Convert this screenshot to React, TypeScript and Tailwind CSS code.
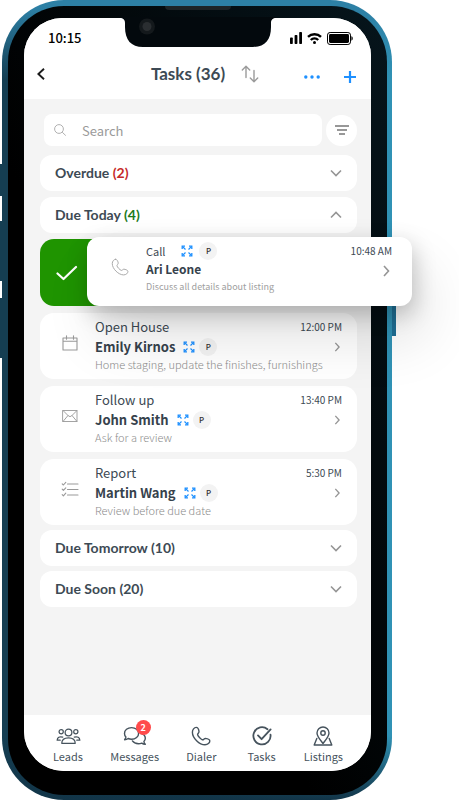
import React, { useState } from "react";

type Task = {
  id: number;
  kind: string;
  name: string;
  note: string;
  time: string;
  icon: React.ReactNode;
};

const stroke = {
  fill: "none",
  stroke: "currentColor",
  strokeLinecap: "round" as const,
  strokeLinejoin: "round" as const,
};

const HANDSET =
  "M5.2 1.4 C3.2 1.4 1.4 3.6 1.4 6.2 C1.4 12 8.4 18.8 14 18.8 C16.8 18.8 18.8 16.8 18.8 15 C18.8 13.4 15.8 12.6 14.4 12.4 C12.9 12.4 12.8 14 11.4 13.8 C9.8 13.2 6.8 10 6.6 8.6 C6.6 7.4 8.2 7 8 5.4 C7.8 4 6.8 1.4 5.2 1.4 Z";

function CalendarIcon() {
  return (
    <svg viewBox="0 0 16 16" className="h-4 w-4" {...stroke} strokeWidth="1.1" aria-hidden="true">
      <path d="M1 3h14v12H1zM1 6.3h14M4.5 .8v3.4M11.5 .8v3.4" />
    </svg>
  );
}

function MailIcon() {
  return (
    <svg viewBox="0 0 16 16" className="h-4 w-4" {...stroke} strokeWidth="0.9" aria-hidden="true">
      <path d="M1 2.5h14v11H1zM1 2.5l5.4 5.4a2.3 2.3 0 0 0 3.2 0L15 2.5M1 13.5l5-6M15 13.5l-5-6" />
    </svg>
  );
}

function ChecklistIcon() {
  return (
    <svg viewBox="0 0 18 16" className="h-4 w-[18px]" {...stroke} strokeWidth="1.1" aria-hidden="true">
      <path d="M6.5 3H17M6.5 8.5H17M6.5 14H17" />
      <path d="M1.2 2.8l1.2 1.2 2.4-2.6M1.2 8.2l1.2 1.2 2.4-2.6M1.2 13.600l1.200 1.200 2.400-2.600" />
    </svg>
  );
}

function ExpandIcon() {
  return (
    <svg viewBox="0 0 12 12" className="h-3 w-3 shrink-0 text-[#1e90ff]" fill="none" stroke="currentColor" aria-hidden="true">
      <path d="M1.2 4V1.2H4M8 1.2h2.8V4M10.8 8v2.8H8M4 10.8H1.2V8" strokeWidth="1.3" />
      <path d="M1.5 1.5l3 3M10.5 1.5l-3 3M10.5 10.5l-3-3M1.5 10.5l3-3" strokeWidth="1.2" />
    </svg>
  );
}

function Chevron({ className, d }: { className: string; d: string }) {
  return (
    <svg viewBox="0 0 12 12" className={className} fill="none" stroke="#959595" strokeWidth="1.6" aria-hidden="true">
      <path d={d} />
    </svg>
  );
}

function Badge() {
  return (
    <span className="flex h-[18px] w-[18px] shrink-0 items-center justify-center rounded-full bg-[#f3f3f3] text-[8px] leading-none font-medium text-[#333]">
      P
    </span>
  );
}

function StatusBar() {
  return (
    <div className="flex h-10 items-center justify-between pr-[18px] pl-6 text-black">
      <span className="text-[13px] leading-5 font-medium">10:15</span>
      <div className="flex items-center gap-[5px]">
        <svg viewBox="0 0 12 12" className="h-3 w-3" fill="currentColor" aria-hidden="true">
          <rect x="0" y="5.5" width="2.8" height="6.5" rx="0.8" />
          <rect x="4.6" y="3" width="2.8" height="9" rx="0.8" />
          <rect x="9.2" y="0" width="2.8" height="12" rx="0.8" />
        </svg>
        <svg viewBox="0 0 15 12" className="h-3 w-[15px]" fill="none" stroke="currentColor" strokeWidth="2.4" aria-hidden="true">
          <path d="M1 4.8a9.4 9.4 0 0 1 13 0M3.8 8a5.4 5.4 0 0 1 7.4 0" />
          <circle cx="7.5" cy="10.4" r="1.5" fill="currentColor" stroke="none" />
        </svg>
        <svg viewBox="0 0 26 13" className="h-[13px] w-[26px]" aria-hidden="true">
          <rect x="0.5" y="0.5" width="23" height="12" rx="2.6" fill="none" stroke="#000" />
          <rect x="2" y="2" width="20" height="9" rx="1.4" />
          <path d="M24.4 4.3c1.8.6 1.8 3.8 0 4.4z" />
        </svg>
      </div>
    </div>
  );
}

function Header() {
  return (
    <header className="rounded-t-[38px] bg-white">
      <StatusBar />
      <div className="flex h-[41px] items-start pt-1.5 pr-[15px] pl-3">
        <button type="button" aria-label="Back" className="flex h-5 w-3 items-center">
          <svg viewBox="0 0 10 14" className="h-3.5 w-2.5" fill="none" stroke="#1c1c1c" strokeWidth="1.9" aria-hidden="true">
            <path d="M8 1.8 2.4 7 8 12.2" />
          </svg>
        </button>
        <div className="flex flex-1 justify-center gap-4 pl-[74px]">
          <h1 className="font-['Lato',sans-serif] text-[17px] leading-5 font-bold text-[#3d4a54]">Tasks (36)</h1>
          <button type="button" aria-label="Sort" className="h-5">
            <svg viewBox="0 0 18 18" className="h-[18px] w-[18px]" {...stroke} stroke="#9b9b9b" strokeWidth="1.4" aria-hidden="true">
              <path d="M5 12.5V1.5M1.3 5 5 1.3 8.7 5M13 5.5v11M9.3 13l3.7 3.7 3.7-3.7" />
            </svg>
          </button>
        </div>
        <button type="button" aria-label="More" className="mr-6 ml-4 flex h-[26px] items-center">
          <svg viewBox="0 0 16 4" className="h-1 w-4" fill="#1e90ff" aria-hidden="true">
            <circle cx="1.8" cy="2" r="1.7" />
            <circle cx="8" cy="2" r="1.7" />
            <circle cx="14.2" cy="2" r="1.7" />
          </svg>
        </button>
        <button type="button" aria-label="Add task" className="flex h-[26px] items-center">
          <svg viewBox="0 0 12 12" className="h-3 w-3" stroke="#1e90ff" strokeWidth="2.2" aria-hidden="true">
            <path d="M6 0v12M0 6h12" />
          </svg>
        </button>
      </div>
    </header>
  );
}

function SearchRow() {
  const [query, setQuery] = useState("");

  return (
    <div className="flex items-center gap-1 pl-1">
      <div className="flex h-8 min-w-0 flex-1 items-center rounded-lg bg-white pl-2.5">
        <label htmlFor="task-search" aria-label="Search">
          <svg viewBox="0 0 12 12" className="h-3 w-3" fill="none" stroke="#b0b0b0" strokeWidth="1" aria-hidden="true">
            <circle cx="5" cy="5" r="4.4" />
            <path d="M8.2 8.2 11.8 11.6" />
          </svg>
        </label>
        <input
          id="task-search"
          type="text"
          value={query}
          onChange={(e) => setQuery(e.target.value)}
          placeholder="Search"
          className="ml-4 h-6 min-w-0 flex-1 bg-transparent text-[13px] outline-none placeholder:text-[#9a9a9a]"
        />
      </div>
      <button type="button" aria-label="Filter" className="flex h-[31px] w-[31px] items-center justify-center rounded-full bg-white">
        <svg viewBox="0 0 14 12" className="h-3 w-3.5" stroke="#777" strokeWidth="1.7" aria-hidden="true">
          <path d="M0 2h14M2 6h10M4 10h6" />
        </svg>
      </button>
    </div>
  );
}

function GroupHeader({ title, count, tone, open, className = "" }: {
  title: string;
  count: number;
  tone?: string;
  open?: boolean;
  className?: string;
}) {
  return (
    <button
      type="button"
      aria-expanded={!!open}
      className={`flex h-9 w-full items-center justify-between rounded-xl bg-white px-[15px] font-['Lato',sans-serif] text-sm font-bold text-[#3d4a54] ${className}`}
    >
      <span>
        {title} <span className={tone}>({count})</span>
      </span>
      <Chevron className="h-3 w-3" d={open ? "M1 8.5 6 3.5l5 5" : "M1 3.5l5 5 5-5"} />
    </button>
  );
}

function SwipedTask() {
  return (
    <div className="relative z-10 mt-1.5 flex h-[67px]">
      <button type="button" aria-label="Mark as done" className="flex w-[70px] shrink-0 items-center rounded-l-[14px] bg-[#1f9400] pl-4">
        <svg viewBox="0 0 22 16" className="h-4 w-[22px]" {...stroke} stroke="#fff" strokeWidth="2.2" aria-hidden="true">
          <path d="M1.5 8.5 7.5 14 20 2" />
        </svg>
      </button>
      <article className="-mt-0.5 -mr-[55px] -ml-[23px] flex min-w-0 flex-1 rounded-xl bg-white pr-5 pl-6 shadow-[2px_8px_22px_rgba(0,0,0,0.22),12px_32px_56px_rgba(0,0,0,0.12)]">
        <svg viewBox="0 0 20 20" className="mt-5 h-5 w-[18px] shrink-0 text-[#a8a8a8]" {...stroke} strokeWidth="1.1" aria-hidden="true">
          <path d={HANDSET} />
        </svg>
        <div className="ml-[17px] min-w-0 flex-1 pt-1">
          <div className="flex h-5 items-center gap-1.5">
            <span className="mr-2.5 text-[11px] leading-4 text-[#3d4a54]">Call</span>
            <ExpandIcon />
            <Badge />
          </div>
          <h2 className="text-xs leading-4 font-bold text-[#36424c]">Ari Leone</h2>
          <p className="text-[9px] leading-5 text-[#a0a0a0]">Discuss all details about listing</p>
        </div>
        <div className="flex flex-col items-end pt-1">
          <time className="text-[10px] leading-5 text-[#3d4a54]">10:48 AM</time>
          <Chevron className="mt-1 h-3 w-3" d="M4 1l4.5 5L4 11" />
        </div>
      </article>
    </div>
  );
}

function TaskCard({ task }: { task: Task }) {
  return (
    <article className="mt-[7px] flex h-[66px] rounded-[14px] bg-white pr-[15px]">
      <div className="flex w-[55px] shrink-0 items-center justify-center pb-1.5 pl-1 text-[#999]">{task.icon}</div>
      <div className="min-w-0 flex-1 pt-1">
        <p className="text-[13px] leading-5 text-[#3d4a54]">{task.kind}</p>
        <div className="flex h-5 items-center gap-1">
          <h2 className="mr-1 text-[13px] leading-5 font-bold text-[#36424c]">{task.name}</h2>
          <ExpandIcon />
          <Badge />
        </div>
        <p className="text-[11px] leading-[14px] font-light whitespace-nowrap text-[#8c8c8c]">{task.note}</p>
      </div>
      <div className="flex shrink-0 flex-col items-end pt-1">
        <time className="text-[10px] leading-5 text-[#3d4a54]">{task.time}</time>
        <Chevron className="mt-1 h-3 w-2.5" d="M4 1l4.5 5L4 11" />
      </div>
    </article>
  );
}

const tasks: Task[] = [
  { id: 1, kind: "Open House", name: "Emily Kirnos", note: "Home staging, update the finishes, furnishings", time: "12:00 PM", icon: <CalendarIcon /> },
  { id: 2, kind: "Follow up", name: "John Smith", note: "Ask for a review", time: "13:40 PM", icon: <MailIcon /> },
  { id: 3, kind: "Report", name: "Martin Wang", note: "Review before due date", time: "5:30 PM", icon: <ChecklistIcon /> },
];

const tabs = [
  {
    label: "Leads",
    icon: (
      <svg viewBox="0 0 26 18" className="h-[18px] w-[25px]" {...stroke} strokeWidth="1.3" aria-hidden="true">
        <circle cx="13" cy="5.4" r="3.5" />
        <circle cx="5.4" cy="4.6" r="2.2" />
        <circle cx="20.6" cy="4.6" r="2.2" />
        <path d="M6 16.6c0-3.6 2.6-5.6 7-5.6s7 2 7 5.6zM7 10.2C3.6 9.2 1.4 10.4 1.2 13.4h3.2M19 10.2c3.4-1 5.6.2 5.8 3.2h-3.2" />
      </svg>
    ),
  },
  {
    label: "Messages",
    badge: 2,
    icon: (
      <svg viewBox="0 0 24 20" className="h-5 w-6" {...stroke} strokeWidth="1.4" aria-hidden="true">
        <path d="M8.6 1.6c4 0 7 2.6 7 5.8s-3 5.8-7 5.8c-1.2 0-2.4-.2-3.4-.7-1 .8-2.2 1.2-3.6 1.2.8-.9 1.2-1.8 1.3-2.8C2 10 1.5 8.8 1.5 7.4c0-3.2 3-5.8 7.1-5.8z" />
        <path d="M18.6 7.6c2.2.8 3.7 2.5 3.7 4.6 0 1.3-.5 2.4-1.4 3.3.1 1 .6 1.9 1.4 2.7-1.4 0-2.6-.4-3.6-1.1-1 .4-2 .6-3.2.6-2.8 0-5-1.1-6.1-2.8" />
      </svg>
    ),
  },
  {
    label: "Dialer",
    icon: (
      <svg viewBox="0 0 20 20" className="h-5 w-5" {...stroke} strokeWidth="1.4" aria-hidden="true">
        <path d={HANDSET} />
      </svg>
    ),
  },
  {
    label: "Tasks",
    icon: (
      <svg viewBox="0 0 20 20" className="h-5 w-5" {...stroke} strokeWidth="1.8" aria-hidden="true">
        <path d="M15.5 3.2A8.6 8.6 0 1 0 18.5 8.6M6 9.4l3.6 3.8L18.6 3.4" />
      </svg>
    ),
  },
  {
    label: "Listings",
    icon: (
      <svg viewBox="0 0 20 20" className="h-5 w-5" {...stroke} strokeWidth="1.4" aria-hidden="true">
        <path d="M10 17.5C7 13.6 4 10.4 4 7a6 6 0 0 1 12 0c0 3.400-3 6.600-6 10.500z" />
        <circle cx="10" cy="7" r="2.2" />
        <path d="M3.8 12.5 1.2 19h17.6l-2.6-6.5" />
      </svg>
    ),
  },
];

function TabBar() {
  return (
    <nav className="flex h-14 items-start justify-between rounded-b-[40px] bg-white pt-[11px] pr-7 pl-[26px]">
      {tabs.map((tab) => (
        <a key={tab.label} href="#" className="flex min-w-9 flex-col items-center text-[#46535d]">
          <span className="relative flex h-5 items-center">
            {tab.icon}
            {tab.badge && (
              <span className="absolute -top-1.5 -right-1 flex h-[15px] w-[15px] items-center justify-center rounded-full bg-[#ff4b4b] text-[9px] leading-none font-bold text-white">
                {tab.badge}
              </span>
            )}
          </span>
          <span className="text-[11px] leading-5">{tab.label}</span>
        </a>
      ))}
    </nav>
  );
}

export default function App() {
  return (
    <main className="overflow-hidden bg-white pr-[67px] pl-0.5 font-['Noto_Sans_CJK_SC',sans-serif]">
      <div className="relative flex min-h-screen flex-col rounded-[62px] bg-[linear-gradient(to_bottom,#2d80a5_0,#2d80a5_1%,transparent_10%),linear-gradient(to_top,#123548_0,transparent_8%),linear-gradient(to_right,#153e52_0,#153e52_50%,#3092b5_96%)] pt-1.5 pr-[5px] pb-[5px] pl-1.5">
        {/* side buttons */}
        <span className="absolute top-[164px] -left-0.5 h-8 w-0.5 bg-[#153e52]" />
        <span className="absolute top-[221px] -left-0.5 h-[60px] w-0.5 bg-[#153e52]" />
        <span className="absolute top-[298px] -left-0.5 h-[60px] w-0.5 bg-[#153e52]" />
        <span className="absolute top-[252px] -right-1 h-[84px] w-1 bg-[#1f6f95]" />

        <div className="flex flex-1 flex-col rounded-[56px] bg-[linear-gradient(to_bottom_left,#06151c,#000_60%)] px-4 pt-3 pb-6">
          <div className="relative flex flex-1 flex-col rounded-t-[38px] rounded-b-[40px] bg-[#f4f4f4]">
            <Header />
            {/* notch */}
            <svg viewBox="0 0 156 30" className="absolute -top-px left-1/2 h-[30px] w-[156px] -translate-x-1/2" aria-hidden="true">
              <path d="M0 0h156v1c-3 0-5 1.5-5 5v4c0 13-6 20-18 20H23C11 30 5 23 5 10V6c0-3.5-2-5-5-5z" fill="#03090d" />
              <circle cx="27" cy="9.5" r="8" fill="#14191c" />
              <circle cx="27" cy="9.5" r="4.5" fill="#2a2e31" />
            </svg>
            <span className="absolute -top-3 left-1/2 h-1 w-[66px] -translate-x-1/2 rounded-b bg-[#1d2427]" />

            <section className="flex-1 pt-[15px] pr-3.5 pb-4 pl-4">
              <SearchRow />
              <GroupHeader title="Overdue" count={2} tone="text-[#c62828]" className="mt-[9px]" />
              <GroupHeader title="Due Today" count={4} tone="text-[#1b7a1b]" open className="mt-1.5" />
              <SwipedTask />
              {tasks.map((task) => (
                <TaskCard key={task.id} task={task} />
              ))}
              <GroupHeader title="Due Tomorrow" count={10} className="mt-[5px]" />
              <GroupHeader title="Due Soon" count={20} className="mt-[5px]" />
            </section>
            <TabBar />
          </div>
        </div>
      </div>
    </main>
  );
}
